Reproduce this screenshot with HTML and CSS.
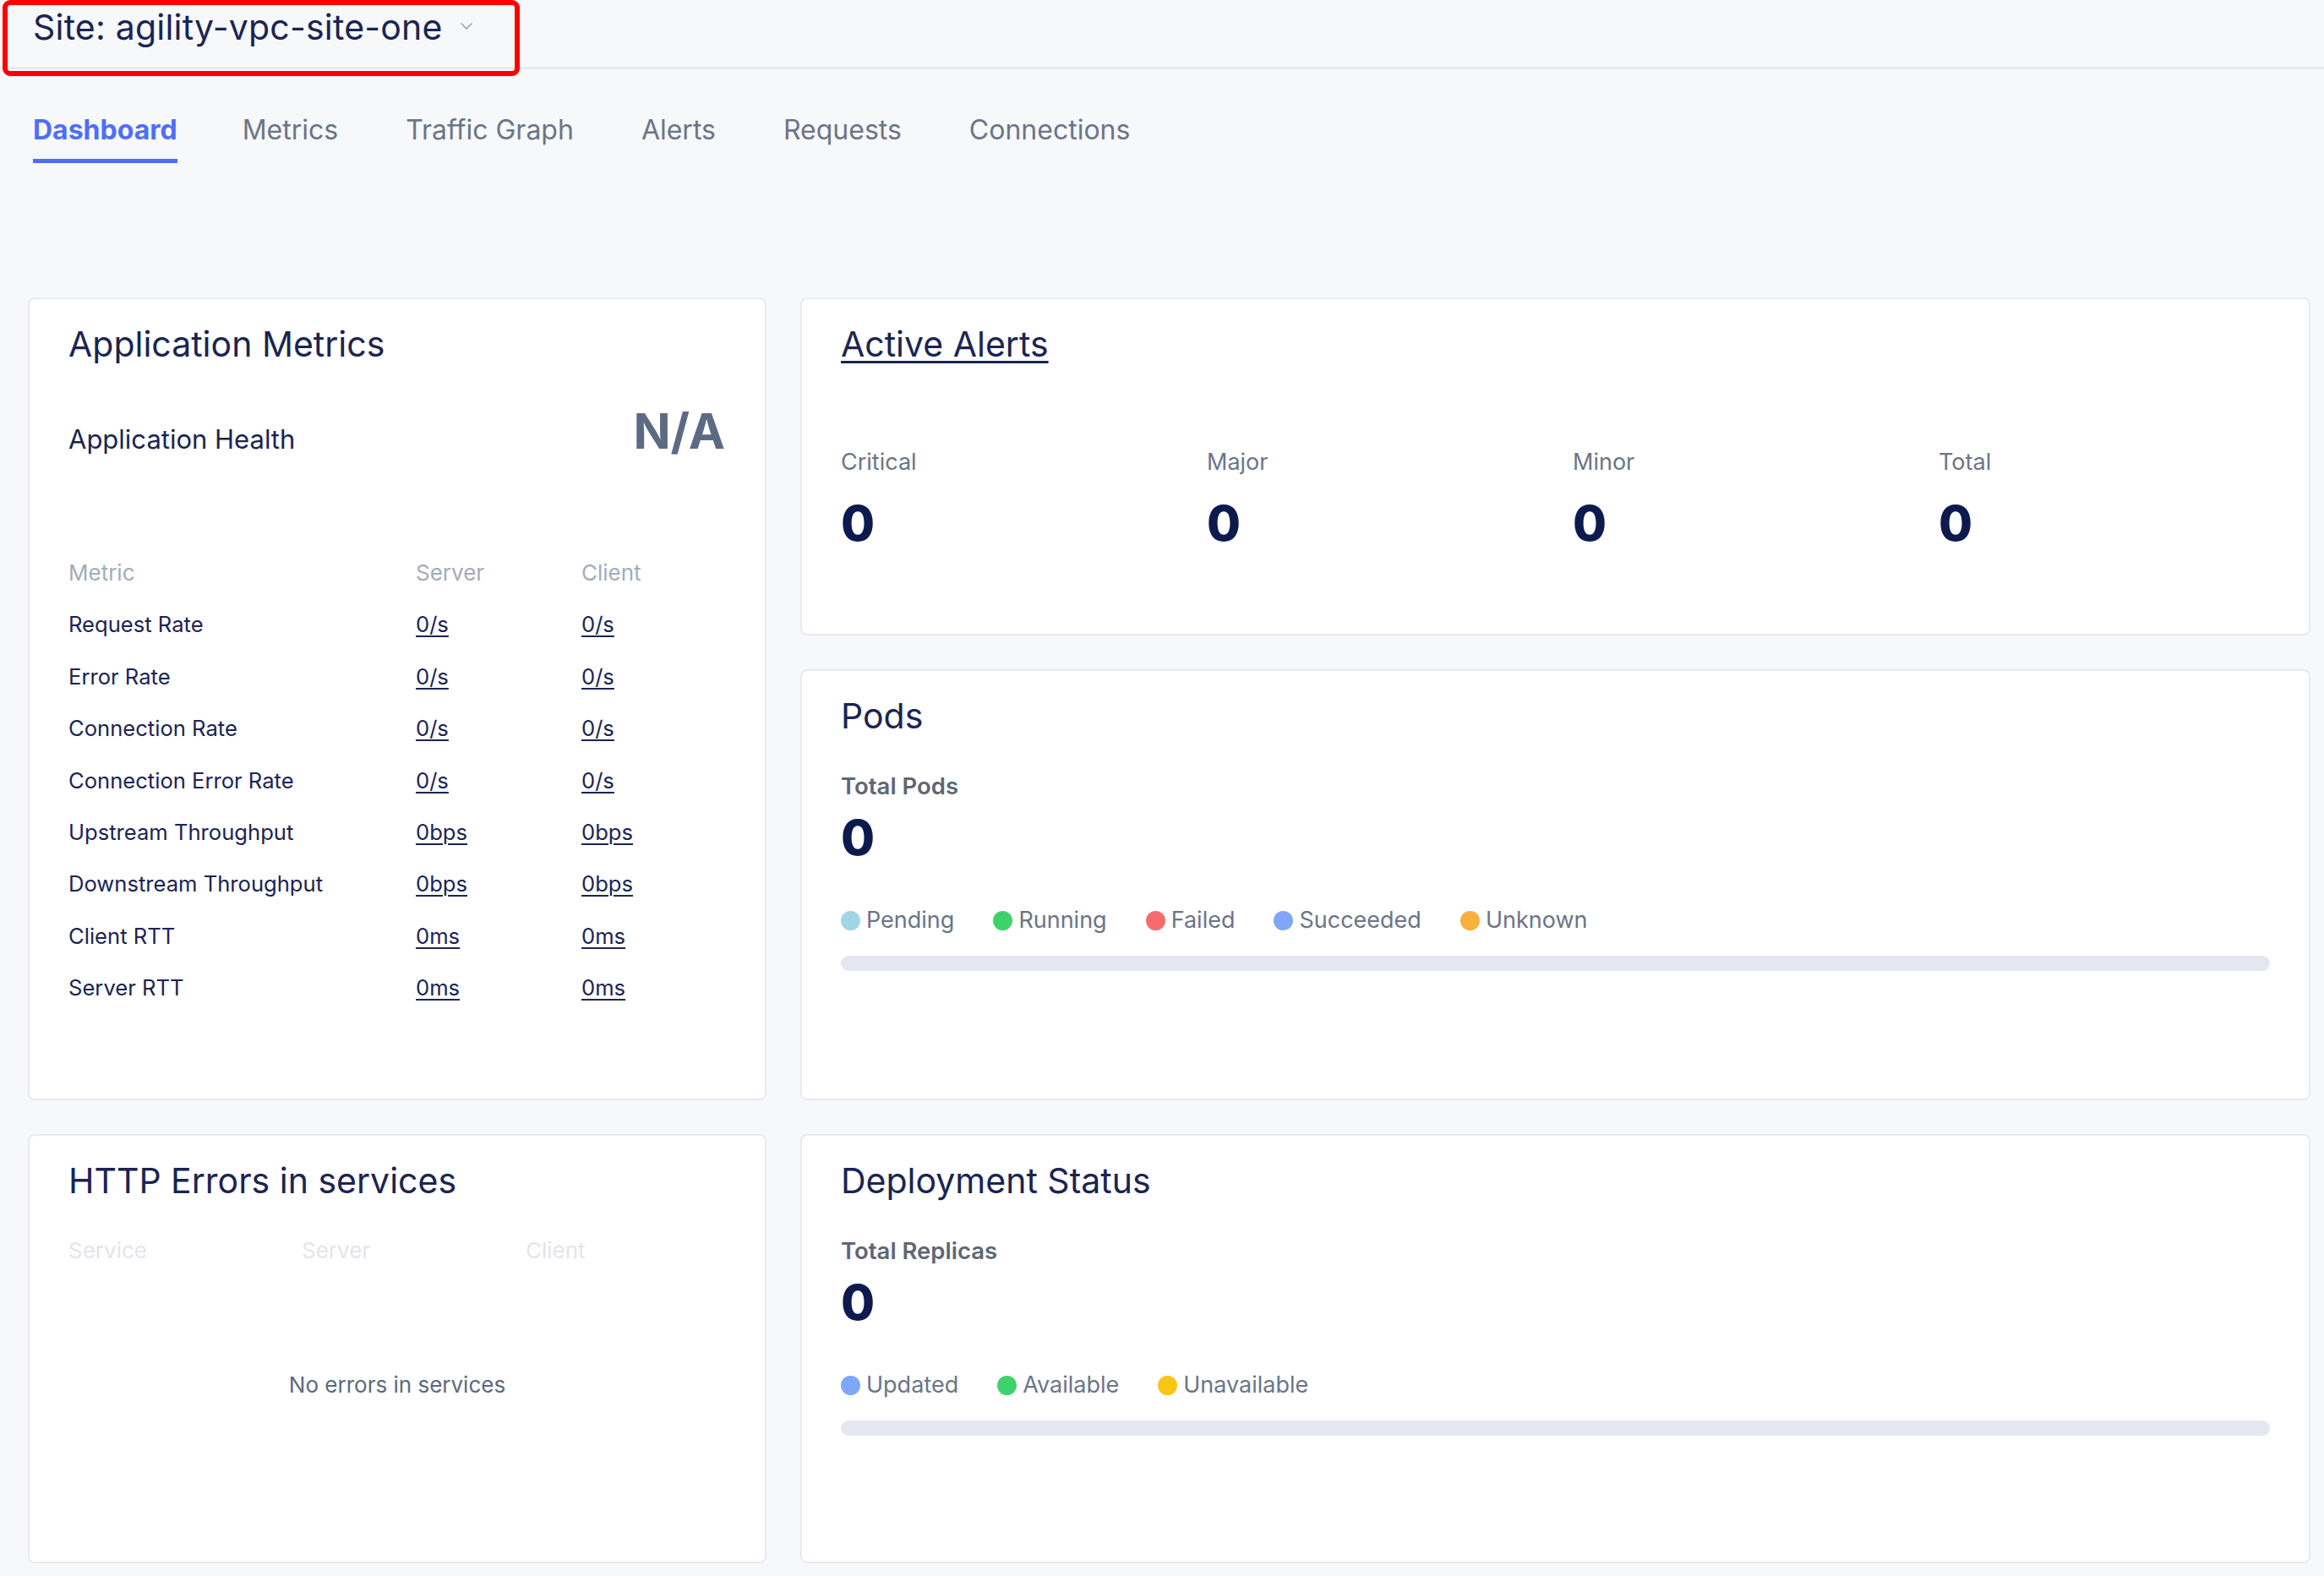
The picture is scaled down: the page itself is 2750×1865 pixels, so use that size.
FILE: index.html
```html
<!DOCTYPE html>
<html lang="en">
<head>
<meta charset="utf-8">
<title>Site Dashboard</title>
<link rel="stylesheet" href="styles.css">
</head>
<body>
<header class="site-header">
  <div class="site-select">
    <span class="site-name">Site: agility-vpc-site-one</span>
    <svg class="chevron" width="16" height="10" viewBox="0 0 16 10"><polyline points="2,2 8,8 14,2" fill="none" stroke="#9aa1b0" stroke-width="1.6" stroke-linecap="round" stroke-linejoin="round"/></svg>
  </div>
  <div class="annotation"></div>
</header>

<nav class="tabs">
  <a class="tab active">Dashboard</a>
  <a class="tab">Metrics</a>
  <a class="tab">Traffic Graph</a>
  <a class="tab">Alerts</a>
  <a class="tab">Requests</a>
  <a class="tab">Connections</a>
</nav>

<main class="grid">
  <section class="card app-metrics">
    <h2 class="card-title">Application Metrics</h2>
    <div class="health">
      <span class="health-label">Application Health</span>
      <span class="health-value">N/A</span>
    </div>
    <div class="mtable">
      <div class="mrow head"><span>Metric</span><span>Server</span><span>Client</span></div>
      <div class="mrow"><span>Request Rate</span><a>0/s</a><a>0/s</a></div>
      <div class="mrow"><span>Error Rate</span><a>0/s</a><a>0/s</a></div>
      <div class="mrow"><span>Connection Rate</span><a>0/s</a><a>0/s</a></div>
      <div class="mrow"><span>Connection Error Rate</span><a>0/s</a><a>0/s</a></div>
      <div class="mrow"><span>Upstream Throughput</span><a>0bps</a><a>0bps</a></div>
      <div class="mrow"><span>Downstream Throughput</span><a>0bps</a><a>0bps</a></div>
      <div class="mrow"><span>Client RTT</span><a>0ms</a><a>0ms</a></div>
      <div class="mrow"><span>Server RTT</span><a>0ms</a><a>0ms</a></div>
    </div>
  </section>

  <section class="card alerts">
    <h2 class="card-title"><a class="title-link">Active Alerts</a></h2>
    <div class="alert-grid">
      <div class="alert-col"><span class="stat-label">Critical</span><span class="big-num">0</span></div>
      <div class="alert-col"><span class="stat-label">Major</span><span class="big-num">0</span></div>
      <div class="alert-col"><span class="stat-label">Minor</span><span class="big-num">0</span></div>
      <div class="alert-col"><span class="stat-label">Total</span><span class="big-num">0</span></div>
    </div>
  </section>

  <section class="card pods">
    <h2 class="card-title">Pods</h2>
    <div class="sub-label">Total Pods</div>
    <div class="big-num">0</div>
    <div class="legend">
      <span class="legend-item"><i class="dot pending"></i>Pending</span>
      <span class="legend-item"><i class="dot running"></i>Running</span>
      <span class="legend-item"><i class="dot failed"></i>Failed</span>
      <span class="legend-item"><i class="dot succeeded"></i>Succeeded</span>
      <span class="legend-item"><i class="dot unknown"></i>Unknown</span>
    </div>
    <div class="bar"></div>
  </section>

  <section class="card http-errors">
    <h2 class="card-title">HTTP Errors in services</h2>
    <div class="err-head"><span>Service</span><span>Server</span><span>Client</span></div>
    <div class="empty">No errors in services</div>
  </section>

  <section class="card deploy">
    <h2 class="card-title">Deployment Status</h2>
    <div class="sub-label">Total Replicas</div>
    <div class="big-num">0</div>
    <div class="legend">
      <span class="legend-item"><i class="dot updated"></i>Updated</span>
      <span class="legend-item"><i class="dot available"></i>Available</span>
      <span class="legend-item"><i class="dot unavailable"></i>Unavailable</span>
    </div>
    <div class="bar"></div>
  </section>
</main>
</body>
</html>
```

FILE: styles.css
```css
* { box-sizing: border-box; }

html, body {
  margin: 0;
  padding: 0;
  background: #f7f8fa;
  font-family: Inter, "Noto Sans", "Liberation Sans", sans-serif;
  color: #1b2452;
}

body { width: 2750px; height: 1865px; overflow: hidden; }

.site-header {
  position: relative;
  height: 82px;
  padding: 8px 0 0 39px;
  border-bottom: 3px solid #e6e9f0;
}

.site-select {
  display: flex;
  align-items: center;
  gap: 20px;
}

.site-name {
  font-size: 41px;
  line-height: 48px;
  color: #1b2452;
  letter-spacing: 0.2px;
}

.chevron { margin-top: -2px; }

.annotation {
  position: absolute;
  left: 3px;
  top: 0;
  width: 612px;
  height: 90px;
  border: 6px solid #ff0000;
  border-radius: 9px;
}

.tabs {
  display: flex;
  gap: 80px;
  padding: 54px 0 0 39px;
  height: 270px;
}

.tab {
  font-size: 32px;
  line-height: 36px;
  color: #6c7486;
  padding-bottom: 16px;
  border-bottom: 5px solid transparent;
  height: 57px;
}

.tab.active {
  color: #4f6ef7;
  font-weight: 700;
  border-bottom-color: #4f6ef7;
  margin-right: -3px;
}

.grid {
  display: grid;
  grid-template-columns: 874px 1787px;
  grid-template-rows: 400px 510px 508px;
  gap: 40px 40px;
  padding-left: 33px;
}

.card {
  background: #ffffff;
  border: 2px solid #e7eaf1;
  border-radius: 8px;
  padding: 29px 46px 0 46px;
}

.app-metrics { grid-column: 1; grid-row: 1 / span 2; }
.alerts { grid-column: 2; grid-row: 1; }
.pods { grid-column: 2; grid-row: 2; }
.http-errors { grid-column: 1; grid-row: 3; }
.deploy { grid-column: 2; grid-row: 3; }

.card-title {
  margin: 0;
  font-size: 41px;
  line-height: 48px;
  font-weight: 400;
  color: #1b2452;
}

.title-link {
  color: #1b2452;
  text-decoration: underline;
  text-decoration-thickness: 3px;
  text-underline-offset: 5px;
}

/* Application metrics */
.health {
  display: flex;
  justify-content: space-between;
  align-items: baseline;
  margin-top: 50px;
}

.health-label {
  font-size: 31px;
  color: #1b2452;
}

.health-value {
  font-size: 58px;
  line-height: 58px;
  font-weight: 700;
  color: #5d6a84;
  margin-right: 1px;
}

.mtable { margin-top: 108px; }

.mrow {
  display: grid;
  grid-template-columns: 411px 196px 1fr;
  font-size: 25.6px;
  line-height: 61.4px;
  height: 61.4px;
  color: #1b2452;
}

.mrow.head { color: #a4abb8; font-size: 26px; }

.mrow a {
  color: #1b2452;
  text-decoration: underline;
  text-decoration-thickness: 2px;
  text-underline-offset: 4px;
}

/* Alerts */
.alert-grid {
  display: grid;
  grid-template-columns: repeat(4, 433px);
  margin-top: 100px;
}

.alert-col {
  display: flex;
  flex-direction: column;
}

.stat-label {
  font-size: 27px;
  line-height: 32px;
  color: #6c7486;
}

.big-num {
  font-size: 58px;
  line-height: 70px;
  font-weight: 800;
  color: #0d1a4e;
}

.alert-col .big-num { margin-top: 21px; }

/* Pods / deployment */
.sub-label {
  margin-top: 43px;
  font-size: 27.5px;
  line-height: 32px;
  font-weight: 600;
  color: #5f6673;
}

.sub-label + .big-num { margin-top: 10px; }

.legend {
  display: flex;
  gap: 46px;
  margin-top: 47px;
  height: 32px;
}

.legend-item {
  display: flex;
  align-items: center;
  gap: 7px;
  font-size: 27px;
  line-height: 32px;
  color: #6c7486;
}

.dot {
  display: inline-block;
  width: 23px;
  height: 23px;
  border-radius: 50%;
}

.dot.pending { background: #9fd6e6; }
.dot.running { background: #3ed36a; }
.dot.failed { background: #f66c6e; }
.dot.succeeded { background: #7fa6f8; }
.dot.unknown { background: #f9b03d; }
.dot.updated { background: #7fa6f8; }
.dot.available { background: #3ed36a; }
.dot.unavailable { background: #fac515; }

.bar {
  margin-top: 26px;
  height: 18px;
  border-radius: 9px;
  background: #e4e7ef;
}

/* HTTP errors */
.err-head {
  display: grid;
  grid-template-columns: 276px 265px 1fr;
  margin-top: 43px;
  font-size: 26px;
  line-height: 32px;
  color: #e2e5eb;
}

.empty {
  margin-top: 127px;
  text-align: center;
  font-size: 26px;
  line-height: 32px;
  color: #5e6880;
}
```
